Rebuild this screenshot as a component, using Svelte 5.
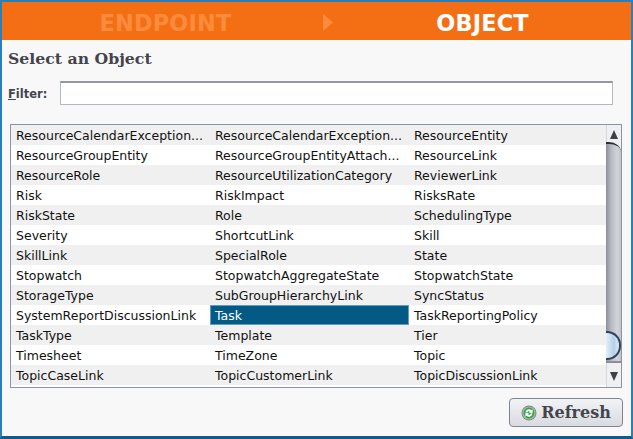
<script>
	const rows = [
		['ResourceCalendarException...', 'ResourceCalendarException...', 'ResourceEntity'],
		['ResourceGroupEntity', 'ResourceGroupEntityAttach...', 'ResourceLink'],
		['ResourceRole', 'ResourceUtilizationCategory', 'ReviewerLink'],
		['Risk', 'RiskImpact', 'RisksRate'],
		['RiskState', 'Role', 'SchedulingType'],
		['Severity', 'ShortcutLink', 'Skill'],
		['SkillLink', 'SpecialRole', 'State'],
		['Stopwatch', 'StopwatchAggregateState', 'StopwatchState'],
		['StorageType', 'SubGroupHierarchyLink', 'SyncStatus'],
		['SystemReportDiscussionLink', 'Task', 'TaskReportingPolicy'],
		['TaskType', 'Template', 'Tier'],
		['Timesheet', 'TimeZone', 'Topic'],
		['TopicCaseLink', 'TopicCustomerLink', 'TopicDiscussionLink']
	];
	let selected = $state('Task');
	let filter = $state('');
</script>

<div class="frame">
	<header class="wizard">
		<span class="step dim">ENDPOINT</span>
		<svg class="arrow" width="11" height="17" viewBox="0 0 11 17"><path d="M0 0 L10 8.5 L0 17 Z" fill="#fc8c3c" /></svg>
		<span class="step">OBJECT</span>
	</header>

	<main class="body">
		<h1>Select an Object</h1>
		<div class="filter">
			<label for="filter"><u>F</u>ilter:</label>
			<input id="filter" bind:value={filter} />
		</div>

		<div class="list">
			<div class="rows">
				{#each rows as row}
					<div class="row">
						{#each row as name}
							<button type="button" class="cell" class:selected={selected === name} onclick={() => (selected = name)}>{name}</button>
						{/each}
					</div>
				{/each}
			</div>
			<div class="scrollbar">
				<div class="end up"><svg width="14" height="14" viewBox="0 0 14 14"><path d="M7 3 L11 12 L3 12 Z" fill="#3c4048" /></svg></div>
				<div class="track"><div class="thumb"></div></div>
				<div class="end down"><svg width="14" height="14" viewBox="0 0 14 14"><path d="M3 4 L11 4 L7 13 Z" fill="#3c4048" /></svg></div>
			</div>
		</div>

		<div class="actions">
			<button type="button" class="refresh">
				<svg width="16" height="16" viewBox="0 0 16 16">
					<circle cx="8" cy="8" r="7.5" fill="#7f8681" />
					<circle cx="8" cy="8" r="6.6" fill="#aeb5b0" />
					<circle cx="8" cy="8" r="5.4" fill="#2ea844" />
					<path d="M4.4 7.4 A3.6 3.6 0 0 1 10.4 5.3 L11.6 4.2 V8 H7.9 L9.2 6.7 A2 2 0 0 0 6.2 7.6 Z M11.6 8.6 A3.6 3.6 0 0 1 5.6 10.7 L4.4 11.8 V8 H8.1 L6.8 9.3 A2 2 0 0 0 9.8 8.4 Z" fill="#fff" />
				</svg>
				Refresh
			</button>
		</div>
	</main>
</div>

<style>
	:global(body) {
		margin: 0;
	}

	.frame {
		width: 633px;
		height: 439px;
		box-sizing: border-box;
		display: flex;
		flex-direction: column;
		background: #f8f8f8;
		border: solid #2a7fba;
		border-width: 2px 2px 3px 2px;
		border-bottom-color: #0f5c8c;
		font-family: 'DejaVu Sans', sans-serif;
		color: #111;
	}

	.wizard {
		height: 38px;
		flex: none;
		display: grid;
		grid-template-columns: 321px 11px 1fr;
		align-items: center;
		background: #f46f14;
		font-size: 22.4px;
		line-height: 38px;
		font-weight: 700;
		color: #fff;
		text-align: center;
	}

	.step {
		padding-top: 2px;
		letter-spacing: 0.2px;
	}

	.dim {
		color: #fc8c3c;
		padding-left: 6px;
	}

	.body {
		flex: 1;
		display: flex;
		flex-direction: column;
		padding: 0 6px;
	}

	h1 {
		margin: 8px 0 0;
		height: 22px;
		font-family: 'DejaVu Serif', serif;
		font-size: 15.7px;
		line-height: 22px;
		font-weight: 700;
		color: #44444c;
	}

	.filter {
		margin-top: 11px;
		display: flex;
		align-items: center;
	}

	label {
		flex: none;
		width: 52px;
		padding-top: 2px;
		font-size: 11.5px;
		font-weight: 700;
		color: #44444c;
	}

	input {
		flex: 1;
		box-sizing: border-box;
		height: 24px;
		margin-right: 12px;
		min-width: 0;
		background: #fff;
		border: 1px solid #b4b8c0;
		border-top: 2px solid #94989e;
		outline: none;
		padding: 0 4px;
	}

	.list {
		margin: 19px 3px 0 2px;
		display: flex;
		height: 264px;
		box-sizing: border-box;
		border: 1px solid #8c94a4;
		background: #fff;
	}

	.rows {
		flex: 1;
		min-width: 0;
	}

	.row {
		display: grid;
		grid-template-columns: 199px 199px 1fr;
		height: 20px;
	}

	.row:nth-child(odd) {
		background: #f0f0f0;
	}

	.cell {
		box-sizing: border-box;
		height: 20px;
		padding: 1px 0 0 4px;
		background: none;
		border: 1px solid transparent;
		font: inherit;
		font-size: 12.5px;
		line-height: 18px;
		color: #111;
		text-align: left;
		white-space: nowrap;
		overflow: hidden;
	}

	.cell.selected {
		background: #035a84;
		border-color: #5f9cc0;
		color: #fff;
	}

	.scrollbar {
		width: 15px;
		flex: none;
		display: flex;
		flex-direction: column;
		background: #f0f0f2;
	}

	.end {
		flex: none;
		display: flex;
		align-items: center;
		justify-content: center;
		background: #f0f0f2;
		border-left: 1px solid #d4d6dc;
	}

	.up {
		height: 17px;
	}

	.down {
		height: 24px;
	}

	.track {
		flex: 1;
		position: relative;
		border-top: 2px solid #2c2e34;
		border-bottom: 2px solid #8c9096;
		border-radius: 0 12px 0 0 / 0 10px 0 0;
		background: linear-gradient(90deg, #8c9096, #b8bbc2 35%, #d2d4da 75%, #c0c3ca);
	}

	.thumb {
		position: absolute;
		left: 0;
		right: 0;
		bottom: 1px;
		height: 29px;
		box-sizing: border-box;
		border: 2px solid #30435c;
		border-left: none;
		border-radius: 0 14px 14px 0;
		background: linear-gradient(90deg, #e6eef6, #b6d0e8 60%, #dce8f2);
	}

	.actions {
		display: flex;
		justify-content: flex-end;
		margin: 10px 2px 0 0;
	}

	.refresh {
		box-sizing: border-box;
		width: 114px;
		height: 29px;
		display: flex;
		align-items: center;
		justify-content: center;
		gap: 4px;
		background: linear-gradient(#f2f3f5, #d8dbe0);
		border: 1px solid #80848c;
		border-radius: 4px;
		font-family: 'DejaVu Serif', serif;
		font-size: 16px;
		font-weight: 700;
		color: #44444c;
		padding: 0;
	}
</style>
